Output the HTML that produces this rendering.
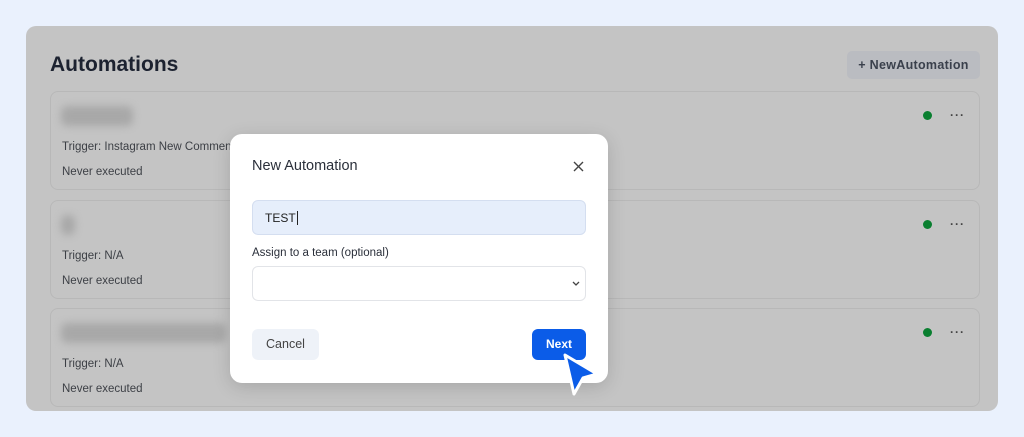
<!DOCTYPE html>
<html><head><style>
*{margin:0;padding:0;box-sizing:border-box}
body{width:1024px;height:437px;background:#eaf1fd;font-family:"Liberation Sans",sans-serif;position:relative;overflow:hidden}
.panel{position:absolute;left:26px;top:26px;width:972px;height:385px;background:#c4c4c4;border-radius:10px;overflow:hidden}
h1{position:absolute;left:24px;top:27px;font-size:21px;font-weight:bold;color:#1c2230}
.btn{position:absolute;left:821px;top:25px;width:133px;height:28px;background:#babcc1;border-radius:5px;color:#3a404c;font-size:12.5px;font-weight:bold;line-height:28px;text-align:center;letter-spacing:.3px}
.card{position:absolute;left:24px;width:930px;height:99px;border:1px solid #b8b8b8;border-radius:8px}
.blur{position:absolute;left:10px;top:14px;height:20px;background:#a8a8a8;border-radius:6px;filter:blur(4px)}
.t{position:absolute;left:11px;font-size:11.5px;color:#3c3f45}
.dot{position:absolute;left:872px;top:19px;width:9px;height:9px;border-radius:50%;background:#0a7f30}
.dots{position:absolute;left:899px;top:16px;font-size:12px;color:#444;letter-spacing:1px;font-weight:bold}
.modal{position:absolute;left:230px;top:134px;width:378px;height:249px;background:#fff;border-radius:12px;box-shadow:0 4px 18px rgba(0,0,0,.15)}
</style></head><body>
<div class="panel">
<h1>Automations</h1>
<div class="btn">+ NewAutomation</div>
<div class="card" style="top:65px"><div class="blur" style="width:72px"></div><div class="t" style="top:49px">Trigger: Instagram New Comment</div><div class="t" style="top:74px">Never executed</div><div class="dot"></div><div class="dots">···</div></div>
<div class="card" style="top:174px"><div class="blur" style="width:14px"></div><div class="t" style="top:49px">Trigger: N/A</div><div class="t" style="top:74px">Never executed</div><div class="dot"></div><div class="dots">···</div></div>
<div class="card" style="top:282px"><div class="blur" style="width:165px"></div><div class="t" style="top:49px">Trigger: N/A</div><div class="t" style="top:74px">Never executed</div><div class="dot"></div><div class="dots">···</div></div>
</div>
<div class="modal">
<div style="position:absolute;left:22px;top:24px;font-size:14.5px;color:#2a2f3a">New Automation</div>
<svg style="position:absolute;left:343px;top:27px" width="11" height="11"><path d="M1 1L10 10M10 1L1 10" stroke="#444" stroke-width="1.4"/></svg>
<div style="position:absolute;left:22px;top:66px;width:334px;height:35px;background:#e6eefb;border:1px solid #d4def0;border-radius:6px;font-size:12px;color:#222;padding:10px 12px">TEST<span style="border-left:1.5px solid #222;margin-left:1px"></span></div>
<div style="position:absolute;left:22px;top:113px;font-size:11.5px;color:#2a2f3a">Assign to a team (optional)</div>
<div style="position:absolute;left:22px;top:132px;width:334px;height:35px;border:1px solid #e2e4e8;border-radius:6px"><svg style="position:absolute;right:5px;top:14px" width="8" height="6"><path d="M1 1L4 4L7 1" stroke="#444" fill="none" stroke-width="1.3"/></svg></div>
<div style="position:absolute;left:22px;top:195px;width:67px;height:31px;background:#eef2f8;border-radius:6px;font-size:12.5px;color:#444;text-align:center;line-height:31px">Cancel</div>
<div style="position:absolute;left:302px;top:195px;width:54px;height:31px;background:#0b5ce8;border-radius:6px;font-size:12px;font-weight:bold;color:#fff;text-align:center;line-height:31px">Next</div>
</div>
<svg style="position:absolute;left:558px;top:350px" width="46" height="50"><path d="M7 5L39 24L25 28L16 44Z" fill="#0b5ce8" stroke="#fff" stroke-width="3" stroke-linejoin="round"/></svg>
</body></html>
